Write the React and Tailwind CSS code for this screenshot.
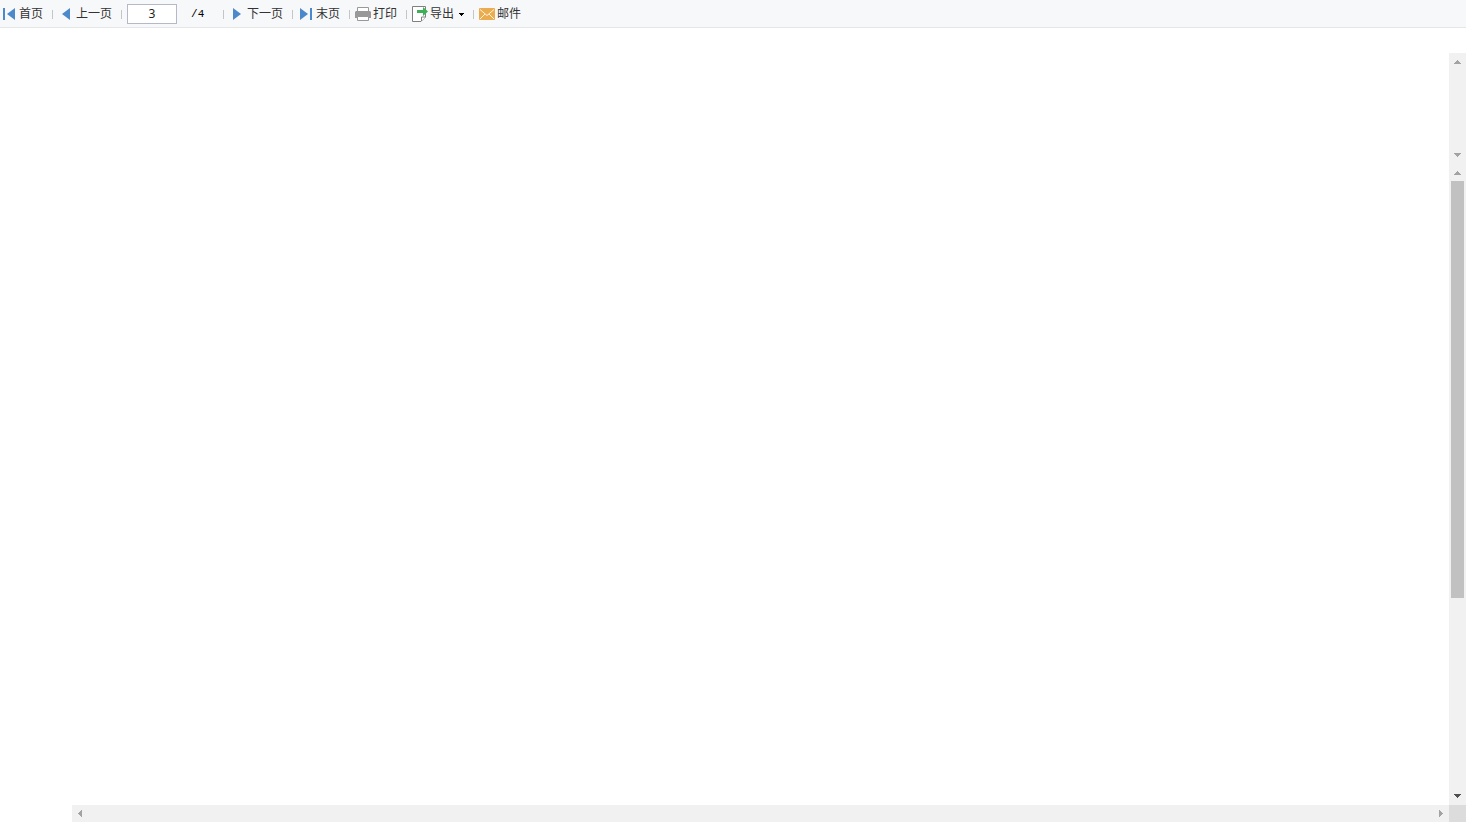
const arrows = {
  up: "M5 11h7v-1h-1v-1h-1v-1h-1v-1h-1v1h-1v1h-1v1h-1z",
  down: "M5 6h7v1h-1v1h-1v1h-1v1h-1v-1h-1v-1h-1v-1h-1z",
  left: "M10 5v7h-1v-1h-1v-1h-1v-1h-1v-1h1v-1h1v-1h1v-1z",
  right: "M7 5v7h1v-1h1v-1h1v-1h1v-1h-1v-1h-1v-1h-1v-1z",
};

function ScrollButton({ direction, label, active }) {
  return (
    <button
      type="button"
      aria-label={label}
      className={active ? "size-[17px] shrink-0 text-[#505050]" : "size-[17px] shrink-0 text-[#a3a3a3]"}
    >
      <svg viewBox="0 0 17 17" className="block size-[17px]" shapeRendering="crispEdges">
        <path d={arrows[direction]} fill="currentColor" />
      </svg>
    </button>
  );
}

function Separator() {
  return <span className="ml-[9px] mr-[5px] mt-0.5 h-[9px] w-px shrink-0 bg-[#c4c5c7]" />;
}

function ToolButton({ icon, children, caret }) {
  return (
    <button type="button" className="flex shrink-0 items-center gap-0.5 whitespace-nowrap">
      <svg viewBox="0 0 16 16" className="size-4 shrink-0">
        {icon}
      </svg>
      <span>{children}</span>
      {caret && (
        <svg viewBox="0 0 6 6" className="ml-0.5 size-1.5" shapeRendering="crispEdges">
          <path d="M1 2h5v1h-1v1h-1v1h-1v-1h-1v-1h-1z" fill="#000" />
        </svg>
      )}
    </button>
  );
}

const firstIcon = (
  <g fill="#4c89ca">
    <path d="M2 2h2v12H2z" />
    <path d="M14 2v12L6 8z" />
  </g>
);

const prevIcon = <path d="M12 2v12L4 8z" fill="#4c89ca" />;

const nextIcon = <path d="M4 2v12L12 8z" fill="#4c89ca" />;

const lastIcon = (
  <g fill="#4c89ca">
    <path d="M12 2h2v12h-2z" />
    <path d="M2 2v12L10 8z" />
  </g>
);

const printIcon = (
  <g>
    <path d="M2.5 6V1.5h11V6" fill="#fff" stroke="#999" />
    <path d="M1 5h14l1 1v6H0V6z" fill="#999" />
    <path d="M2.5 10.5h11v4h-11z" fill="#fff" stroke="#999" />
  </g>
);

const exportIcon = (
  <g>
    <path d="M13.5 11V.5H.5v15h8.500l4.500-4.500z" fill="#fff" stroke="#808080" />
    <path d="M9.5 15v-4h4" fill="#fff" stroke="#808080" />
    <path d="M5 4h6V1l5 4.500-5 4.500V7H5z" fill="#3daf54" />
  </g>
);

const mailIcon = (
  <g>
    <rect y="2" width="16" height="12" rx="1" fill="#ebac50" />
    <path d="M1 3.500l7 6 7-6M1 13l5-5M15 13l-5-5" fill="none" stroke="#fff3df" />
  </g>
);

function Toolbar() {
  return (
    <header className="flex h-7 shrink-0 items-center border-b border-[#e5e6e8] bg-[#f7f8fa] pl-px text-xs text-[#333]">
      <ToolButton icon={firstIcon}>首页</ToolButton>
      <Separator />
      <ToolButton icon={prevIcon}>上一页</ToolButton>
      <Separator />
      <input
        type="text"
        aria-label="页码"
        defaultValue="3"
        className="h-5 w-[50px] border border-[#b5b8c8] bg-white text-center text-xs text-[#222]"
      />
      <span className="ml-3.5 mt-0.5 w-[23px] font-['Liberation_Mono',monospace] text-[11px] text-black">/4</span>
      <Separator />
      <ToolButton icon={nextIcon}>下一页</ToolButton>
      <Separator />
      <ToolButton icon={lastIcon}>末页</ToolButton>
      <Separator />
      <ToolButton icon={printIcon}>打印</ToolButton>
      <Separator />
      <ToolButton icon={exportIcon} caret>导出</ToolButton>
      <Separator />
      <ToolButton icon={mailIcon}>邮件</ToolButton>
    </header>
  );
}

function App() {
  return (
    <div className="flex h-screen flex-col overflow-hidden bg-white font-['Noto_Sans','Noto_Sans_CJK_SC',sans-serif]">
      <Toolbar />

      <main className="flex min-h-0 flex-1 flex-col pt-[25px]">
        <div className="flex min-h-0 flex-1">
          <div className="flex-1" />
          <div className="flex w-[17px] flex-col bg-[#f1f1f1]">
            <div className="flex h-[111px] shrink-0 flex-col justify-between">
              <ScrollButton direction="up" label="向上滚动" />
              <ScrollButton direction="down" label="向下滚动" />
            </div>
            <div className="flex min-h-0 flex-1 flex-col">
              <ScrollButton direction="up" label="向上滚动" />
              <div className="min-h-0 flex-1 pl-0.5">
                <div className="h-11/16 w-[13px] bg-[#c1c1c1]" />
              </div>
              <ScrollButton direction="down" label="向下滚动" active />
            </div>
          </div>
        </div>

        <div className="flex h-[17px] shrink-0 pl-[72px]">
          <div className="flex flex-1 justify-between bg-[#f1f1f1]">
            <ScrollButton direction="left" label="向左滚动" />
            <ScrollButton direction="right" label="向右滚动" />
          </div>
          <div className="w-[17px] bg-[#dcdcdc]" />
        </div>
      </main>
    </div>
  );
}

export default App;
